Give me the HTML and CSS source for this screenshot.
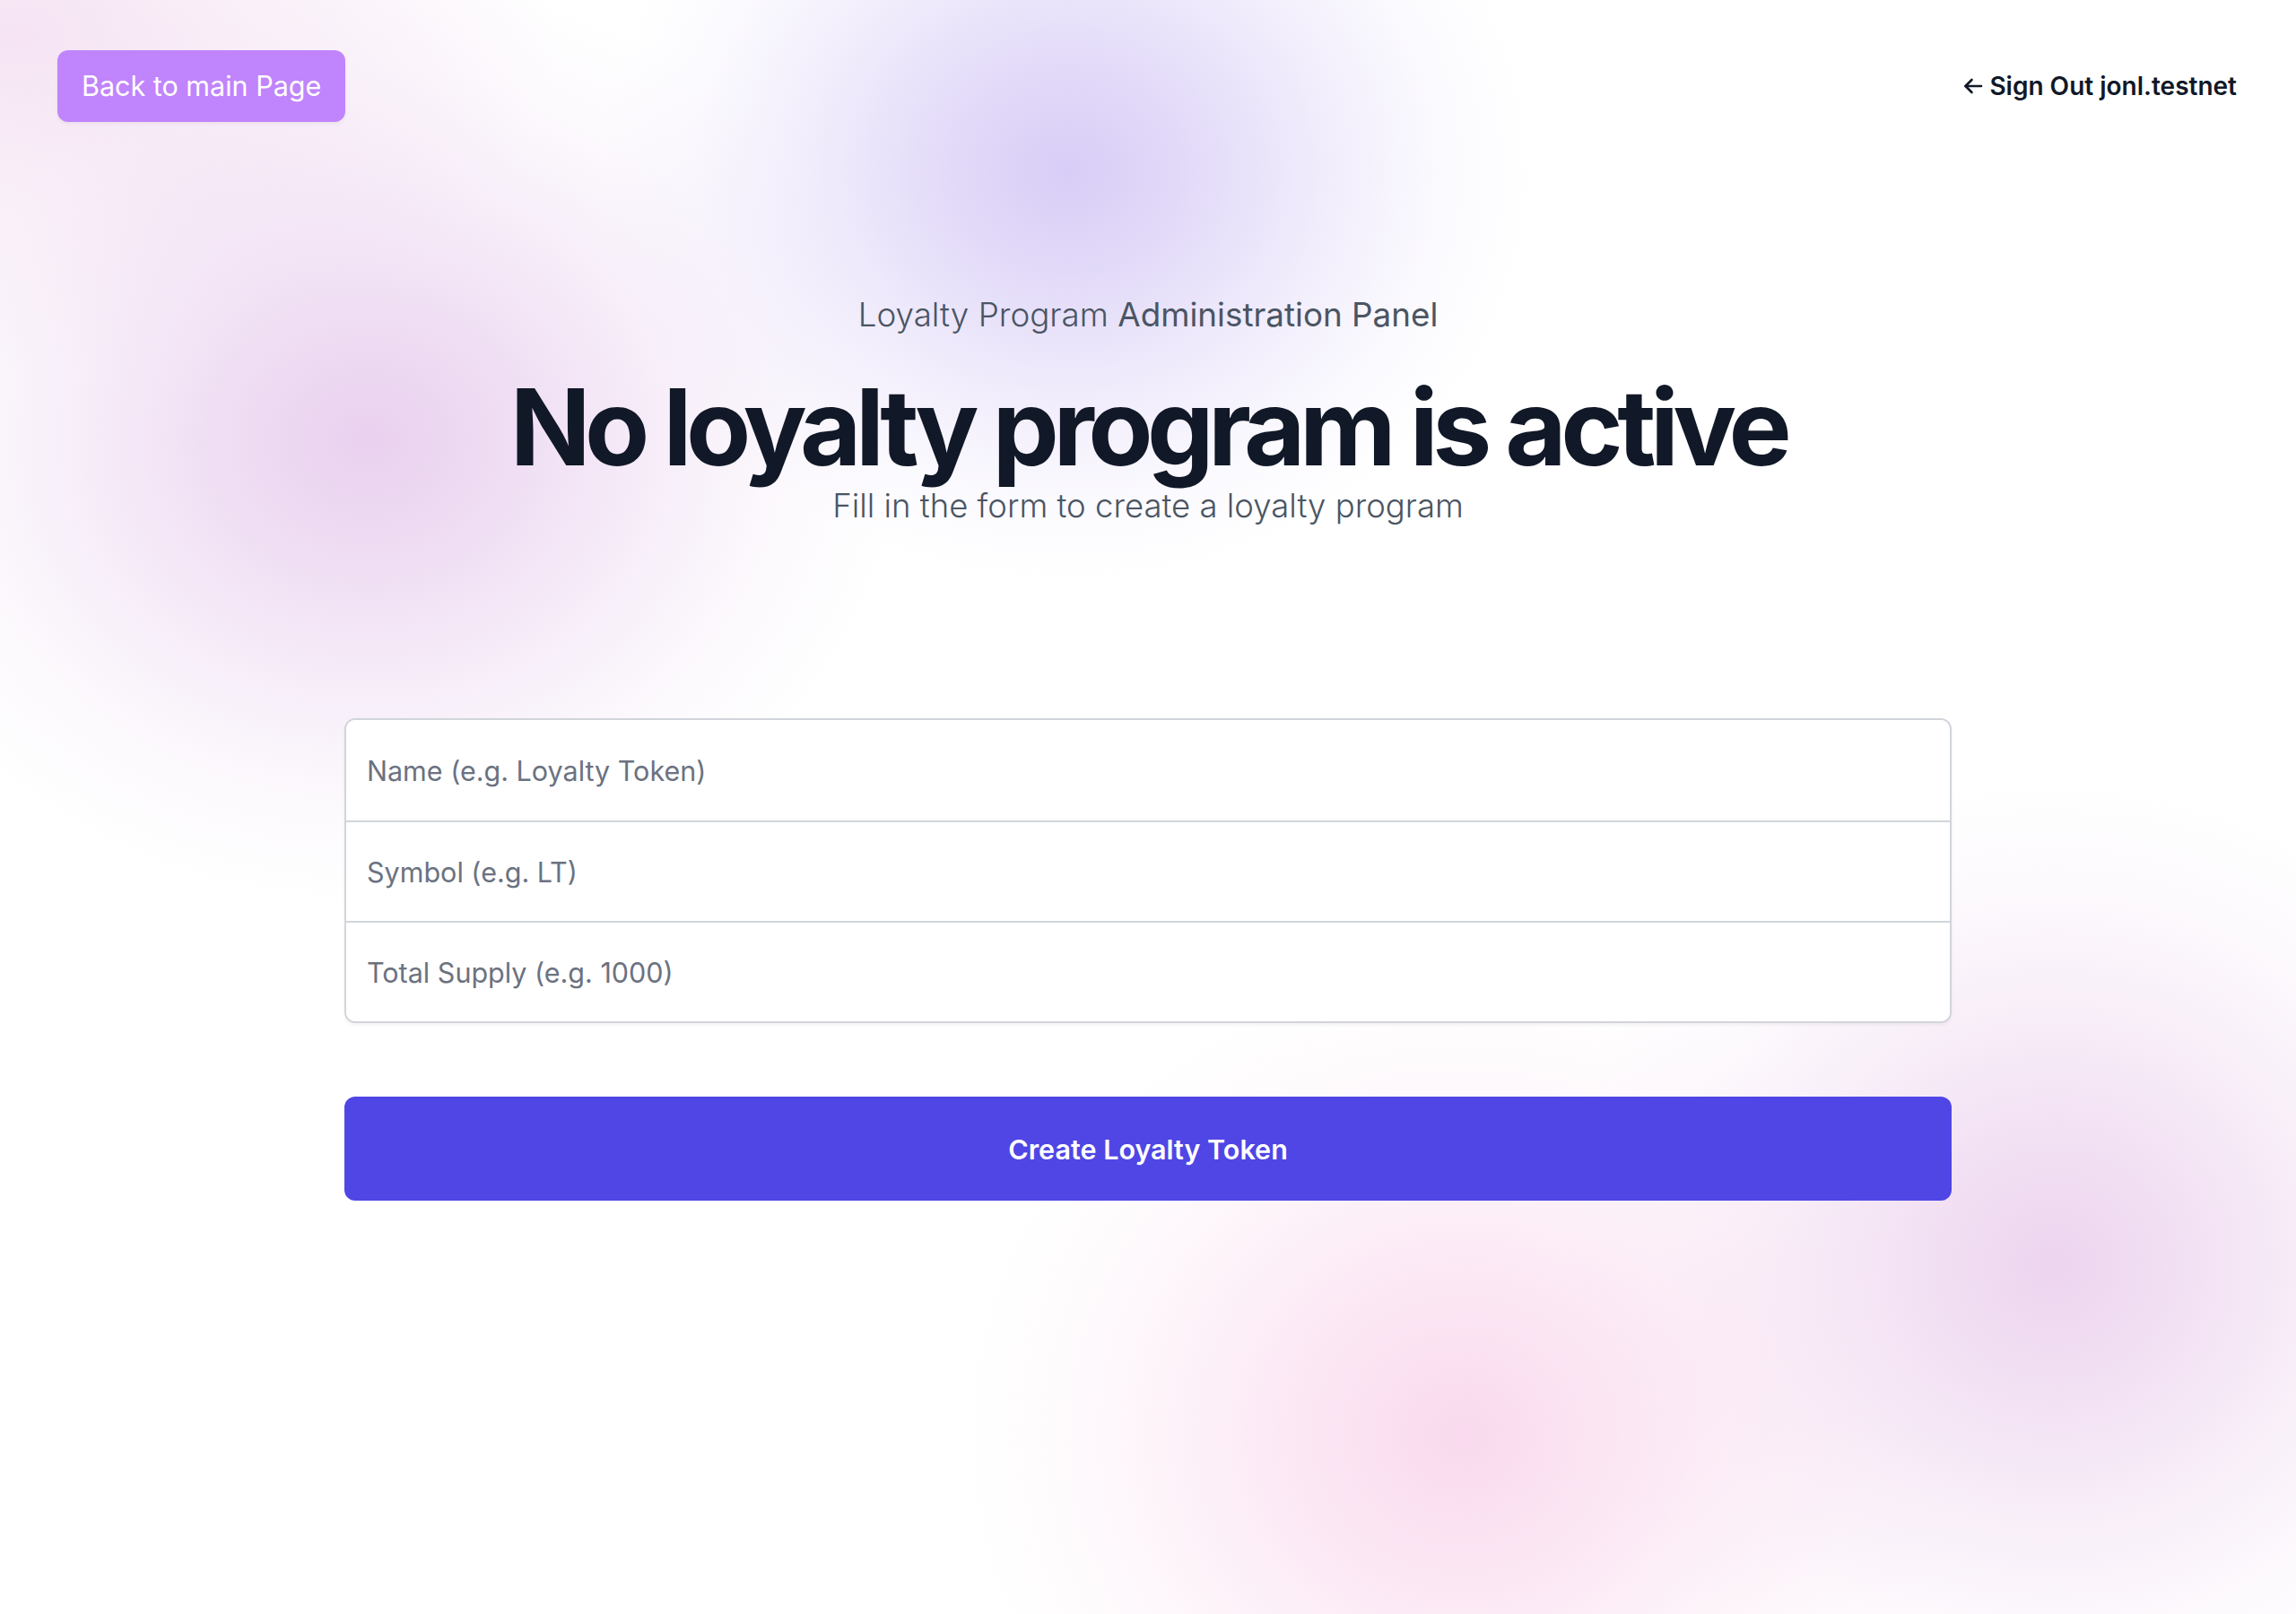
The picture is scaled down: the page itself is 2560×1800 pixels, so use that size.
FILE: index.html
```html
<!DOCTYPE html>
<html lang="en">
<head>
<meta charset="utf-8">
<title>Loyalty Program Administration Panel</title>
<link rel="stylesheet" href="styles.css">
</head>
<body>
<div class="page">
  <header class="topbar">
    <button class="back-btn" type="button">Back to main Page</button>
    <a class="signout" href="#">
      <svg class="signout-icon" viewBox="0 0 24 24" width="24" height="24" fill="none" stroke="currentColor" stroke-width="2.6" stroke-linecap="round" stroke-linejoin="round"><path d="M21 12H3.5"/><path d="M10.5 5L3.5 12l7 7"/></svg>
      <span>Sign Out jonl.testnet</span>
    </a>
  </header>

  <main class="hero">
    <p class="eyebrow"><span class="light">Loyalty Program</span> <span class="regular">Administration Panel</span></p>
    <h1 class="title">No loyalty program is active</h1>
    <p class="subtitle">Fill in the form to create a loyalty program</p>

    <form class="token-form">
      <div class="fields">
        <input class="field" type="text" placeholder="Name (e.g. Loyalty Token)">
        <input class="field" type="text" placeholder="Symbol (e.g. LT)">
        <input class="field" type="text" placeholder="Total Supply (e.g. 1000)">
      </div>
      <button class="submit" type="button">Create Loyalty Token</button>
    </form>
  </main>
</div>
</body>
</html>
```

FILE: styles.css
```css
* { box-sizing: border-box; }

html, body {
  margin: 0;
  padding: 0;
}

body {
  min-height: 1800px;
  font-family: Inter, "Noto Sans", sans-serif;
  color: #111827;
  background-color: #ffffff;
  background-image:
    radial-gradient(ellipse 520px 460px at 1190px 190px,
      rgba(214, 202, 246, 0.95) 0%, rgba(214, 202, 246, 0.7) 25%, rgba(214, 202, 246, 0.35) 55%, rgba(214, 202, 246, 0.1) 80%, rgba(214, 202, 246, 0) 100%),
    radial-gradient(ellipse 600px 520px at 410px 490px,
      rgba(232, 206, 238, 0.95) 0%, rgba(232, 206, 238, 0.7) 25%, rgba(232, 206, 238, 0.35) 55%, rgba(232, 206, 238, 0.1) 80%, rgba(232, 206, 238, 0) 100%),
    radial-gradient(ellipse 560px 520px at 1630px 1600px,
      rgba(249, 216, 237, 0.95) 0%, rgba(249, 216, 237, 0.7) 25%, rgba(249, 216, 237, 0.35) 55%, rgba(249, 216, 237, 0.1) 80%, rgba(249, 216, 237, 0) 100%),
    radial-gradient(ellipse 560px 540px at 2290px 1410px,
      rgba(236, 210, 238, 0.95) 0%, rgba(236, 210, 238, 0.7) 25%, rgba(236, 210, 238, 0.35) 55%, rgba(236, 210, 238, 0.1) 80%, rgba(236, 210, 238, 0) 100%),
    radial-gradient(ellipse 600px 380px at 20px 40px,
      rgba(244, 224, 242, 0.9) 0%, rgba(244, 224, 242, 0.5) 40%, rgba(244, 224, 242, 0) 100%);
  background-repeat: no-repeat;
}

.page {
  min-height: 1800px;
}

.topbar {
  display: flex;
  justify-content: space-between;
  align-items: center;
  padding: 56px 66px 0 64px;
}

.back-btn {
  height: 80px;
  padding: 0 27px;
  border: none;
  border-radius: 12px;
  background: #c084fc;
  color: #ffffff;
  font-family: Inter, sans-serif;
  font-size: 30.5px;
  font-weight: 400;
  line-height: 48px;
  box-shadow: 0 2px 4px rgba(0, 0, 0, 0.05);
  cursor: pointer;
}

.signout {
  display: flex;
  align-items: center;
  gap: 6px;
  color: #111827;
  text-decoration: none;
  font-size: 28px;
  font-weight: 600;
  line-height: 40px;
}

.signout-icon {
  display: block;
}

.hero {
  display: flex;
  flex-direction: column;
  align-items: center;
  text-align: center;
}

.eyebrow {
  margin: 187px 0 0;
  font-size: 36.8px;
  line-height: 56px;
  color: #4b5563;
}

.eyebrow .light { font-weight: 300; }
.eyebrow .regular { font-weight: 400; }

.title {
  margin: 37px 0 0;
  font-size: 118px;
  line-height: 120px;
  font-weight: 700;
  letter-spacing: -0.055em;
  color: #111827;
}

.subtitle {
  margin: 0;
  font-size: 36.5px;
  line-height: 56px;
  font-weight: 300;
  color: #4b5563;
}

.token-form {
  width: 1792px;
  margin-top: 209px;
  display: flex;
  flex-direction: column;
  gap: 82px;
}

.fields {
  display: flex;
  flex-direction: column;
  border: 2px solid #d1d5db;
  border-radius: 12px;
  background: #ffffff;
  box-shadow: 0 2px 4px rgba(0, 0, 0, 0.05);
  overflow: hidden;
}

.field {
  height: 112px;
  border: none;
  border-top: 2px solid #d1d5db;
  padding: 0 23px;
  font-family: Inter, sans-serif;
  font-size: 30.5px;
  color: #111827;
  background: #ffffff;
  outline: none;
}

.field:first-child { border-top: none; }

.field::placeholder {
  color: #6b7280;
}

.submit {
  height: 116px;
  border: none;
  border-radius: 12px;
  background: #4f46e5;
  color: #ffffff;
  font-family: Inter, sans-serif;
  font-size: 30.5px;
  font-weight: 600;
  cursor: pointer;
}
```
